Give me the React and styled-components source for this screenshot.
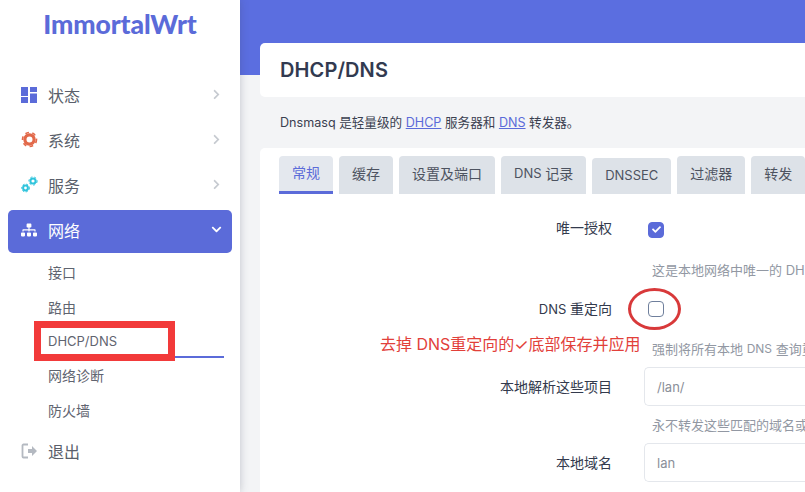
import React from 'react';
import styled, { createGlobalStyle } from 'styled-components';
import { FaChevronRight, FaChevronDown, FaSitemap, FaCheck } from 'react-icons/fa';

const Global = createGlobalStyle`
  html, body { margin: 0; padding: 0; width: 805px; height: 492px; overflow: hidden; background: #f3f4f6; }
  * { box-sizing: border-box; }
  body { font-family: Inter, "Noto Sans CJK SC", sans-serif; }
`;
const Page = styled.div`
  position: relative; width: 805px; height: 492px; overflow: hidden;
  display: grid; grid-template-columns: 240px 565px; background: #f3f4f6;
`;
const Sidebar = styled.aside`
  background: #fff; box-shadow: 0 0 8px rgba(60,70,90,.28); z-index: 2; padding: 0 8px; height: 492px;
`;
const Logo = styled.div`
  height: 75px; padding-top: 6px; text-align: center; color: #5b6bd9;
  font: 900 26.5px/37px Lato, sans-serif; letter-spacing: -.1px;
`;
const Menu = styled.nav`display: flex; flex-direction: column;`;
const Item = styled.div`
  height: ${p => p.$active ? 43 : 45}px; margin-bottom: ${p => p.$active ? 2 : 0}px; display: flex; align-items: center;
  padding: 0 10px ${p => p.$active ? 4 : 6}px 13px; border-radius: 5px; font-size: 16px;
  background: ${p => p.$active ? '#5b6bd9' : 'transparent'};
  color: ${p => p.$active ? '#fff' : '#5a5f6b'};
`;
const ExitItem = styled(Item)`margin-top: 3px;`;
const IconSlot = styled.span`width: 27px; height: 18px; display: flex; align-items: center; flex: none;`;
const Name = styled.span`flex: 1;`;
const SubMenu = styled.div`display: flex; flex-direction: column; margin-right: 8px;`;
const SubItem = styled.div`
  height: ${p => p.$active ? 33 : 35}px; display: flex; align-items: center; font-size: 14px; color: #5f6470;
  padding-left: 40px; padding-bottom: 2px;
  ${p => p.$active && 'border-bottom: 2px solid #5b6bd9; padding-left: 14px; margin-left: 26px; padding-bottom: 0;'}
`;
const Lat = styled.span`font-size: 13px;`;
const HelpLat = styled.span`font-size: 12px;`;
const Main = styled.main`display: flex; flex-direction: column; min-width: 0;`;
const Band = styled.div`height: 75px; background: #5b6ee0; flex: none; margin-bottom: -32px;`;
const Content = styled.div`padding-left: 20px; display: flex; flex-direction: column;`;
const TitleCard = styled.div`
  height: 54px; background: #fff; border-radius: 5px 0 0 5px; padding: 0 0 1px 20px; display: flex; align-items: center;
`;
const Title = styled.h1`margin: 0; font-size: 20px; font-weight: 600; color: #323a50; letter-spacing: .1px;`;
const Desc = styled.p`
  margin: 0; height: 51px; padding: 17px 0 0 20px; font-size: 12.6px; line-height: 18px; color: #3a4050;
  a { color: #5b6bd9; text-decoration: underline; }
`;
const Panel = styled.section`background: #fff; border-radius: 5px 0 0 0; height: 344px; padding-top: 8px; overflow: hidden;`;
const Tabs = styled.div`display: flex; gap: 6px; padding-left: 19px; height: 38px; align-items: flex-end;`;
const Tab = styled.div`
  height: ${p => p.$short ? 36 : 38}px; padding: 0 13px ${p => p.$short ? 3 : 4}px; flex: none; display: flex; align-items: center; white-space: pre;
  border-radius: 4px 4px 0 0; font-size: 14px;
  color: ${p => p.$active ? '#5b6bd9' : '#4d5360'};
  background: ${p => p.$active ? '#e4e8ee' : '#dde2e8'};
  border-bottom: ${p => p.$active ? '3px solid #5b6bd9' : '0'};
`;
const Form = styled.div`display: flex; flex-direction: column; padding-top: 14px;`;
const Row = styled.div`
  display: grid; grid-template-columns: 352px 1fr; column-gap: 32px; align-items: center; height: ${p => p.$h}px;
`;
const Label = styled.div`
  text-align: right; font-size: 14px; color: #333a4d; padding-bottom: ${p => p.$up || 2}px;
`;
const Box = styled.div`
  width: 16px; height: 16px; border-radius: 4px; margin-left: 4px; display: flex; align-items: center; justify-content: center;
  background: ${p => p.$on ? '#5b6bd9' : '#fff'}; border: 1px solid ${p => p.$on ? '#5b6bd9' : '#6f7f9c'};
`;
const Help = styled.div`
  margin-left: 392px; height: ${p => p.$h}px; display: flex; align-items: center; white-space: pre; font-size: 13px; color: #9298a3;
`;
const Input = styled.div`
  height: 39px; border: 1px solid #e4e7ec; border-right: 0; border-radius: 5px 0 0 5px; padding-left: 12px;
  display: flex; align-items: center; font-size: 13px; color: #8a8f99; background: #fff;
`;
const RedFrame = styled.div`
  position: absolute; left: 34px; top: 321px; width: 141px; height: 40px; border: 7px solid #f23a3a; z-index: 3;
`;
const RedOval = styled.div`
  position: absolute; left: 628px; top: 288px; width: 53px; height: 42px; border: 3px solid #d8393a; border-radius: 50%; z-index: 3;
`;
const Note = styled.div`
  position: absolute; left: 380px; top: 333px; font-size: 16px; line-height: 22px; color: #e2403a; white-space: nowrap; z-index: 3;
`;

const Dash = () => (
  <svg width="16" height="16" viewBox="0 0 16 16" fill="#5b6bd9">
    <rect x="0" y="0" width="7" height="9" /><rect x="9" y="0" width="7" height="5" />
    <rect x="0" y="10" width="7" height="6" /><rect x="9" y="6.5" width="7" height="9.5" />
  </svg>
);
const Gear = ({ cx, cy, r, color, w }) => (
  <g>
    <circle cx={cx} cy={cy} r={r} fill="none" stroke={color} strokeWidth={w} />
    <circle cx={cx} cy={cy} r={r + w / 2 + w * .25} fill="none" stroke={color} strokeWidth={w * .5} strokeDasharray={`${r * .8} ${r * .75}`} />
  </g>
);
const Sys = () => <svg width="17" height="17" viewBox="0 0 17 17"><Gear cx={8.5} cy={8.5} r={4.6} color="#e2694a" w={3.2} /></svg>;
const Svc = () => (
  <svg width="17" height="17" viewBox="0 0 17 17">
    <Gear cx={4.5} cy={12} r={2.4} color="#2fc4dc" w={2} />
    <Gear cx={12} cy={5} r={2.6} color="#2fc4dc" w={2} />
  </svg>
);
const Exit = () => (
  <svg width="17" height="16" viewBox="0 0 17 16" fill="none">
    <path d="M7 1.5H2.5a1 1 0 0 0-1 1v11a1 1 0 0 0 1 1H7" stroke="#b4b9c1" strokeWidth="1.8" />
    <path d="M7 6h4V3l5 5-5 5v-3H7z" fill="#b4b9c1" />
  </svg>
);
const Right = () => <FaChevronRight size={11} color="#c6cad0" />;

export default function App() {
  return (
    <Page>
      <Global />
      <Sidebar>
        <Logo>ImmortalWrt</Logo>
        <Menu>
          <Item><IconSlot><Dash /></IconSlot><Name>状态</Name><Right /></Item>
          <Item><IconSlot><Sys /></IconSlot><Name>系统</Name><Right /></Item>
          <Item><IconSlot><Svc /></IconSlot><Name>服务</Name><Right /></Item>
          <Item $active><IconSlot><FaSitemap size={16} color="#fff" /></IconSlot><Name>网络</Name><FaChevronDown size={11} color="#fff" /></Item>
        </Menu>
        <SubMenu>
          <SubItem>接口</SubItem>
          <SubItem>路由</SubItem>
          <SubItem $active><Lat>DHCP/DNS</Lat></SubItem>
          <SubItem>网络诊断</SubItem>
          <SubItem>防火墙</SubItem>
        </SubMenu>
        <ExitItem><IconSlot><Exit /></IconSlot><Name>退出</Name></ExitItem>
      </Sidebar>
      <Main>
        <Band />
        <Content>
          <TitleCard><Title>DHCP/DNS</Title></TitleCard>
          <Desc>Dnsmasq 是轻量级的 <a>DHCP</a> 服务器和 <a>DNS</a> 转发器。</Desc>
          <Panel>
            <Tabs>
              <Tab $active>常规</Tab>
              <Tab>缓存</Tab>
              <Tab>设置及端口</Tab>
              <Tab><Lat>DNS </Lat>记录</Tab>
              <Tab $short><Lat>DNSSEC</Lat></Tab>
              <Tab>过滤器</Tab>
              <Tab>转发</Tab>
            </Tabs>
            <Form>
              <Row $h={43}><Label $up={6}>唯一授权</Label><Box $on><FaCheck size={9} color="#fff" /></Box></Row>
              <Help $h={36}>这是本地网络中唯一的 DHCP 服务器</Help>
              <Row $h={43}><Label><Lat>DNS </Lat>重定向</Label><Box /></Row>
              <Help $h={36}>强制将所有本地 <HelpLat>DNS</HelpLat> 查询重定向到</Help>
              <Row $h={41}><Label>本地解析这些项目</Label><Input>/lan/</Input></Row>
              <Help $h={35}>永不转发这些匹配的域名或子域名</Help>
              <Row $h={41}><Label>本地域名</Label><Input>lan</Input></Row>
            </Form>
          </Panel>
        </Content>
      </Main>
      <RedFrame />
      <RedOval />
      <Note>去掉 DNS重定向的✓底部保存并应用</Note>
    </Page>
  );
}
